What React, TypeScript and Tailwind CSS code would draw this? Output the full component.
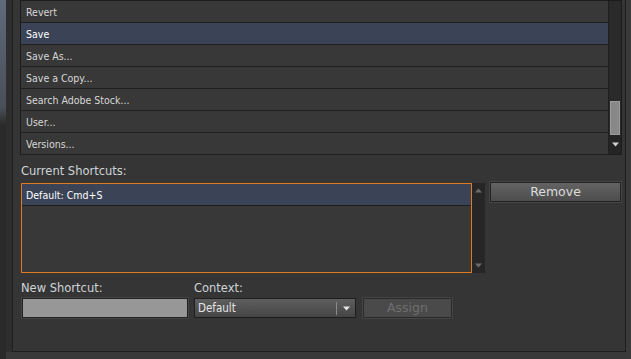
import React from 'react';

const rows = ['Revert', 'Save', 'Save As...', 'Save a Copy...', 'Search Adobe Stock...', 'User...', 'Versions...'];

const font = { fontFamily: '"DejaVu Sans Condensed", "DejaVu Sans", sans-serif' };
const labelFont = { fontFamily: '"DejaVu Sans", "Liberation Sans", sans-serif' };

const App = () => {
  return (
    <div className="w-[631px] h-[359px] overflow-hidden flex bg-[#393939] text-[10.5px]" style={font}>
      <div className="w-[6px] h-full bg-gradient-to-b from-[#5f6a7c] via-[#4a4f58] via-30% to-[#2a2a2a] to-35%" />
      <div className="w-[6px] h-[352px] bg-[#2e2e2e]" />
      <div className="w-[614px] h-[352px] border-l border-r border-b border-[#1f1f1f] bg-[#353535] pl-[7px] pr-[3px] flex flex-col">
        {/* command list */}
        <div className="flex h-[155px] border border-[#1c1c1c] bg-[#383838]">
          <div className="flex-1 flex flex-col">
            {rows.map((r) => (
              <div
                key={r}
                className={`h-[22px] shrink-0 border-b border-[#1f1f1f] pl-[5px] pt-[3px] flex items-center ${
                  r === 'Save' ? 'bg-[#3a4456] text-white' : 'text-[#d6d6d6]'
                }`}
              >
                {r}
              </div>
            ))}
          </div>
          <div className="w-[13px] border-l border-[#1f1f1f] bg-[#2a2a2a] flex flex-col">
            <div className="h-[100px]" />
            <div className="h-[34px] mx-[1px] bg-[#888888] border border-[#9a9a9a]" />
            <div className="flex-1 flex items-center justify-center bg-[#242424]">
              <svg width="7" height="5" viewBox="0 0 7 5">
                <path d="M0 0.5 H7 L3.5 4.5 Z" fill="#d0d0d0" />
              </svg>
            </div>
          </div>
        </div>

        <div className="mt-[10px] ml-[1px] h-[14px] flex items-center text-[11.5px] text-[#cfd4d8]" style={labelFont}>
          Current Shortcuts:
        </div>

        <div className="mt-[3px] flex items-start">
          <div className="ml-[1px] mt-[1px] flex h-[90px]">
            <div className="w-[451px] border border-[#e07a22] bg-[#383838]">
              <div className="h-[22px] border-b border-[#1f1f1f] bg-[#3a4456] pl-[4px] pt-[2px] flex items-center text-white">
                Default: Cmd+S
              </div>
            </div>
            <div className="w-[13px] bg-[#262626] flex flex-col items-center justify-between py-[5px]">
              <svg width="7" height="5" viewBox="0 0 7 5">
                <path d="M0 4.5 H7 L3.5 0.5 Z" fill="#6c6c6c" />
              </svg>
              <svg width="7" height="5" viewBox="0 0 7 5">
                <path d="M0 0.5 H7 L3.5 4.5 Z" fill="#6c6c6c" />
              </svg>
            </div>
          </div>
          <button
            className="ml-[5px] w-[131px] h-[20px] border border-[#222] outline outline-1 outline-[#454545] bg-gradient-to-b from-[#636363] to-[#4d4d4d] text-[12.5px] text-[#dcdcdc] flex items-center justify-center pt-[1px]"
            style={labelFont}
          >
            Remove
          </button>
        </div>

        <div className="mt-[9px] flex">
          <div className="ml-[1px] w-[173px] flex flex-col">
            <div className="h-[14px] flex items-center text-[11.5px] text-[#cfd4d8]" style={labelFont}>
              New Shortcut:
            </div>
            <div className="mt-[2px] ml-[1px] w-[166px] h-[20px] bg-[#979797] border border-[#222] outline outline-1 outline-[#444]" />
          </div>
          <div className="flex flex-col">
            <div className="h-[14px] flex items-center text-[11.5px] text-[#cfd4d8]" style={labelFont}>
              Context:
            </div>
            <div className="mt-[2px] flex">
              <div className="w-[162px] h-[20px] border border-[#1e1e1e] bg-gradient-to-b from-[#5f5f5f] to-[#454545] flex items-center text-[11.5px] text-[#e4e4e4]">
                <span className="flex-1 pl-[3px] pt-[1px]">Default</span>
                <div className="w-px h-[13px] bg-[#8a8a8a]" />
                <div className="w-[18px] flex items-center justify-center">
                  <svg width="7" height="5" viewBox="0 0 7 5">
                    <path d="M0 0.5 H7 L3.5 4.5 Z" fill="#e8e8e8" />
                  </svg>
                </div>
              </div>
              <button
                className="ml-[7px] w-[89px] h-[20px] border border-[#2a2a2a] outline outline-1 outline-[#454545] bg-[#4a4a4a] text-[12.5px] text-[#6e6e6e] flex items-center justify-center pt-[1px]"
                style={labelFont}
              >
                Assign
              </button>
            </div>
          </div>
        </div>
      </div>
      <div className="flex-1 h-full bg-[#3a3a3a]" />
    </div>
  );
};

export default App;
